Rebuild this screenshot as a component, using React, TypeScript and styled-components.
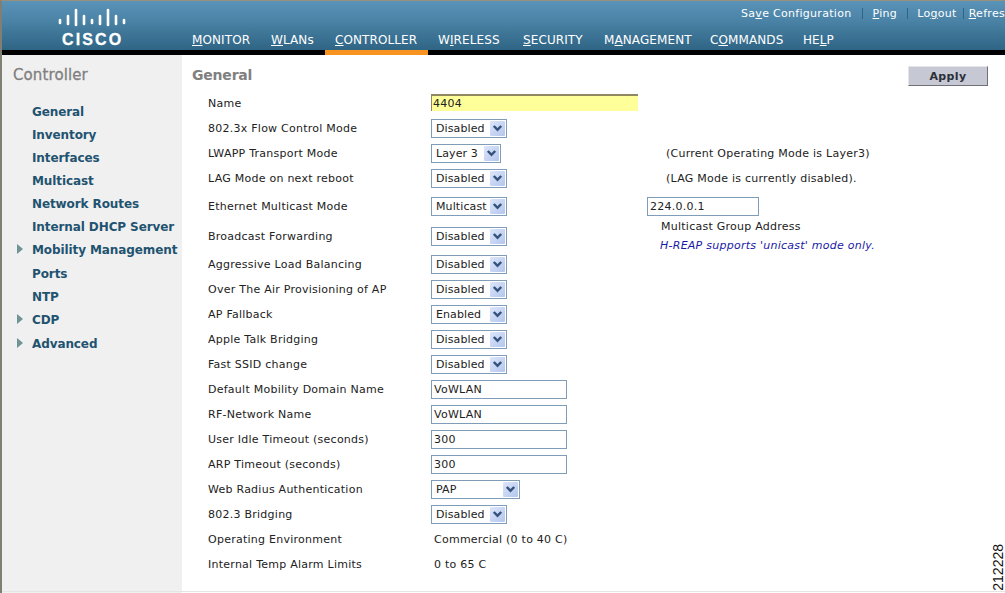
import styled, {createGlobalStyle} from "styled-components";

const GlobalStyle = createGlobalStyle`
    html, body {
        margin: 0;
        padding: 0;
        background: #FFF;
        overflow: hidden;
    }
    * {
        box-sizing: border-box;
    }
`

const Page = styled.div`
    position: relative;
    width: 1005px;
    height: 593px;
    overflow: hidden;
    display: flex;
    flex-direction: column;
    border-top: 1px solid #9A8F78;
    border-left: 2px solid #7F7F74;
    font-family: "DejaVu Sans", Verdana, sans-serif;
    font-size: 11px;
    letter-spacing: 0.25px;
    color: #222;
`

const Header = styled.header`
    flex: none;
    height: 49px;
    display: flex;
    background: linear-gradient(180deg, #5A93B8 0%, #4A83A6 40%, #2F6484 100%);
`

const LogoBlock = styled.div`
    flex: none;
    width: 190px;
    display: flex;
    flex-direction: column;
    align-items: flex-start;
    padding: 7px 0 0 56px;
    gap: 4px;
`

const LogoText = styled.span`
    margin-left: 4px;
    font-family: "Liberation Sans", Arial, sans-serif;
    font-size: 16px;
    font-weight: 700;
    line-height: 15px;
    letter-spacing: 2.1px;
    color: #FFF;
    -webkit-text-stroke: 0.3px #FFF;
`

const HeaderRight = styled.div`
    flex: 1;
    min-width: 0;
    display: flex;
    flex-direction: column;
    justify-content: space-between;
`

const TopLinks = styled.div`
    display: flex;
    align-items: center;
    white-space: nowrap;
    height: 24px;
    padding-left: 539px;
    overflow: hidden;
    color: #FFF;
    letter-spacing: 0.3px;
`

const TopLink = styled.span<{ $left: number, $right?: number, $last?: boolean }>`
    flex: none;
    padding: 0 ${p => p.$right ?? 10}px 0 ${p => p.$left}px;
    border-right: ${p => p.$last ? 'none' : '1px solid #2F6484'};
    line-height: 11px;
`

const Nav = styled.nav`
    display: flex;
    height: 19px;
`

const NavItem = styled.span<{ $width: number, $active?: boolean }>`
    flex: none;
    width: ${p => p.$width}px;
    line-height: 18px;
    font-size: 12px;
    letter-spacing: 0.1px;
    color: #FFF;
    white-space: nowrap;
    padding-left: ${p => p.$active ? '10px' : '0'};
`

const BlackBar = styled.div`
    flex: none;
    height: 5px;
    background: #000;
    padding-left: 323px;
`

const ActiveMark = styled.div`
    width: 103px;
    height: 5px;
    background: #F7931E;
`

const Body = styled.div`
    flex: 1;
    min-height: 0;
    display: flex;
`

const Sidebar = styled.aside`
    flex: none;
    width: 180px;
    background: #F0F0F0;
    padding: 10px 0 0 11px;
`

const SideTitle = styled.h2`
    margin: 0 0 16px 0;
    font-size: 15px;
    font-weight: 400;
    line-height: 20px;
    letter-spacing: 0.1px;
    color: #808080;
    -webkit-text-stroke: 0.3px #808080;
`

const SideList = styled.ul`
    list-style: none;
    margin: 0;
    padding: 0;
`

const SideItem = styled.li<{ $arrow?: boolean }>`
    position: relative;
    height: ${p => p.$arrow ? 24 : 23}px;
    line-height: 23px;
    padding-left: 19px;
    font-size: 12px;
    font-weight: 700;
    letter-spacing: -0.1px;
    white-space: nowrap;
    color: #1F5370;

    &::before {
        content: "";
        display: ${p => p.$arrow ? 'block' : 'none'};
        position: absolute;
        left: 4px;
        top: 5px;
        border-left: 6px solid #6E9494;
        border-top: 5px solid transparent;
        border-bottom: 5px solid transparent;
    }
`

const Main = styled.main`
    flex: 1;
    min-width: 0;
    padding: 10px 17px 0 10px;
`

const TitleRow = styled.div`
    display: flex;
    justify-content: space-between;
    align-items: flex-start;
    height: 26px;
`

const PageTitle = styled.h1`
    margin: 0;
    font-size: 14px;
    font-weight: 700;
    line-height: 21px;
    letter-spacing: -0.2px;
    color: #808080;
`

const ApplyButton = styled.button`
    width: 80px;
    height: 20px;
    margin-top: 1px;
    padding: 0;
    font-family: inherit;
    font-size: 11px;
    font-weight: 700;
    letter-spacing: 0.4px;
    color: #2A2F3A;
    background: #C6C8D4;
    border: 1px solid;
    border-color: #E4E4EA #6F7078 #6F7078 #E4E4EA;
`

const Form = styled.div`
    display: flex;
    flex-direction: column;
    padding-left: 16px;
`

const Row = styled.div<{ $height?: number }>`
    display: grid;
    grid-template-columns: 223px 216px 1fr;
    grid-template-rows: 100%;
    align-items: center;
    height: ${p => p.$height ?? 25}px;
`

const Label = styled.span`
    white-space: nowrap;
`

const TextInput = styled.input<{ $width?: number }>`
    display: block;
    width: ${p => p.$width ?? 136}px;
    height: 19px;
    padding: 0 2px;
    font-family: inherit;
    font-size: 11px;
    letter-spacing: inherit;
    color: #222;
    background: #FFF;
    border: 1px solid #7F9DB9;
    outline: none;
`

const NameInput = styled(TextInput)`
    width: 207px;
    height: 17px;
    margin-bottom: 2px;
    padding: 0 1px;
    background: #FFFF99;
    border: none;
    border-top: 2px solid #8E8760;
    border-left: 1px solid #8E8760;
`

const SelectBox = styled.div<{ $width: number }>`
    display: flex;
    align-items: center;
    justify-content: space-between;
    width: ${p => p.$width}px;
    height: 19px;
    padding: 1px 1px 1px 4px;
    letter-spacing: 0.1px;
    background: #FFF;
    border: 1px solid #7F9DB9;
`

const SelectArrow = styled.span`
    flex: none;
    width: 15px;
    height: 15px;
    display: flex;
    align-items: center;
    justify-content: center;
    background: linear-gradient(135deg, #DCE6FA 0%, #B4C6EE 100%);
    border-radius: 1px;
`

const PlainValue = styled.span`
    padding-left: 3px;
    white-space: nowrap;
`

const NoteStack = styled.div`
    margin-bottom: 2px;
`

const Note = styled.div<{ $indent: number, $blue?: boolean }>`
    padding-left: ${p => p.$indent}px;
    white-space: nowrap;
    line-height: 19px;
    font-style: ${p => p.$blue ? 'italic' : 'normal'};
    color: ${p => p.$blue ? '#1A1AA6' : '#222'};
`

const FigureNumber = styled.span`
    position: absolute;
    right: 0;
    bottom: 2px;
    writing-mode: vertical-rl;
    transform: rotate(180deg);
    font-family: "Liberation Sans", Arial, sans-serif;
    font-size: 14px;
    line-height: 13px;
    letter-spacing: 0;
    color: #111;
`

const FootLine = styled.div`
    position: absolute;
    left: 0;
    right: 0;
    bottom: 1px;
    height: 1px;
    background: #E4E4E4;
`

const ChevronIcon = () => (
    <svg width="11" height="9" viewBox="0 0 11 9">
        <path d="M1.8 2 L5.5 5.8 L9.2 2" fill="none" stroke="#34527C" strokeWidth="2.5"/>
    </svg>
)

const CiscoBars = () => (
    <svg width="70" height="20" viewBox="0 0 70 20">
        {[[2, 12, 15], [10, 8, 16], [18, 2, 17], [26, 8, 16], [34, 12, 15], [42, 8, 16], [50, 2, 17], [58, 8, 16], [66, 12, 15]].map(([x, top, bottom]) =>
            <line key={x} x1={x} x2={x} y1={top} y2={bottom} stroke="#FFF" strokeWidth="2.6" strokeLinecap="round"/>
        )}
    </svg>
)

const Select = ({value, width}: { value: string, width: number }) => (
    <SelectBox $width={width}>
        <span>{value}</span>
        <SelectArrow><ChevronIcon/></SelectArrow>
    </SelectBox>
)

const menu = [
    {name: 'General'},
    {name: 'Inventory'},
    {name: 'Interfaces'},
    {name: 'Multicast'},
    {name: 'Network Routes'},
    {name: 'Internal DHCP Server'},
    {name: 'Mobility Management', arrow: true},
    {name: 'Ports'},
    {name: 'NTP'},
    {name: 'CDP', arrow: true},
    {name: 'Advanced', arrow: true},
]

export default function App() {
    return (
        <Page>
            <GlobalStyle/>
            <Header>
                <LogoBlock>
                    <CiscoBars/>
                    <LogoText>CISCO</LogoText>
                </LogoBlock>
                <HeaderRight>
                    <TopLinks>
                        <TopLink $left={10}>Sa<u>v</u>e Configuration</TopLink>
                        <TopLink $left={10}><u>P</u>ing</TopLink>
                        <TopLink $left={9} $right={6}>Lo<u>g</u>out</TopLink>
                        <TopLink $left={5} $right={0} $last><u>R</u>efresh</TopLink>
                    </TopLinks>
                    <Nav>
                        <NavItem $width={79}><u>M</u>ONITOR</NavItem>
                        <NavItem $width={54}><u>W</u>LANs</NavItem>
                        <NavItem $width={113} $active><u>C</u>ONTROLLER</NavItem>
                        <NavItem $width={85}>W<u>I</u>RELESS</NavItem>
                        <NavItem $width={81}><u>S</u>ECURITY</NavItem>
                        <NavItem $width={106}>M<u>A</u>NAGEMENT</NavItem>
                        <NavItem $width={93}>C<u>O</u>MMANDS</NavItem>
                        <NavItem $width={50}>HE<u>L</u>P</NavItem>
                    </Nav>
                </HeaderRight>
            </Header>
            <BlackBar><ActiveMark/></BlackBar>
            <Body>
                <Sidebar>
                    <SideTitle>Controller</SideTitle>
                    <SideList>
                        {menu.map(i => <SideItem key={i.name} $arrow={i.arrow}>{i.name}</SideItem>)}
                    </SideList>
                </Sidebar>
                <Main>
                    <TitleRow>
                        <PageTitle>General</PageTitle>
                        <ApplyButton>Apply</ApplyButton>
                    </TitleRow>
                    <Form>
                        <Row><Label>Name</Label><NameInput defaultValue="4404"/></Row>
                        <Row><Label>802.3x Flow Control Mode</Label><Select value="Disabled" width={76}/></Row>
                        <Row>
                            <Label>LWAPP Transport Mode</Label>
                            <Select value="Layer 3" width={70}/>
                            <Note $indent={19}>(Current Operating Mode is Layer3)</Note>
                        </Row>
                        <Row>
                            <Label>LAG Mode on next reboot</Label>
                            <Select value="Disabled" width={76}/>
                            <Note $indent={19}>(LAG Mode is currently disabled).</Note>
                        </Row>
                        <Row $height={31}>
                            <Label>Ethernet Multicast Mode</Label>
                            <Select value="Multicast" width={76}/>
                            <TextInput $width={112} defaultValue="224.0.0.1"/>
                        </Row>
                        <Row $height={29}>
                            <Label>Broadcast Forwarding</Label>
                            <Select value="Disabled" width={76}/>
                            <NoteStack>
                                <Note $indent={14}>Multicast Group Address</Note>
                                <Note $indent={13} $blue>H-REAP supports 'unicast' mode only.</Note>
                            </NoteStack>
                        </Row>
                        <Row $height={26}><Label>Aggressive Load Balancing</Label><Select value="Disabled" width={76}/></Row>
                        <Row><Label>Over The Air Provisioning of AP</Label><Select value="Disabled" width={76}/></Row>
                        <Row><Label>AP Fallback</Label><Select value="Enabled" width={76}/></Row>
                        <Row><Label>Apple Talk Bridging</Label><Select value="Disabled" width={76}/></Row>
                        <Row><Label>Fast SSID change</Label><Select value="Disabled" width={76}/></Row>
                        <Row><Label>Default Mobility Domain Name</Label><TextInput defaultValue="VoWLAN"/></Row>
                        <Row><Label>RF-Network Name</Label><TextInput defaultValue="VoWLAN"/></Row>
                        <Row><Label>User Idle Timeout (seconds)</Label><TextInput defaultValue="300"/></Row>
                        <Row><Label>ARP Timeout (seconds)</Label><TextInput defaultValue="300"/></Row>
                        <Row><Label>Web Radius Authentication</Label><Select value="PAP" width={89}/></Row>
                        <Row><Label>802.3 Bridging</Label><Select value="Disabled" width={76}/></Row>
                        <Row><Label>Operating Environment</Label><PlainValue>Commercial (0 to 40 C)</PlainValue></Row>
                        <Row><Label>Internal Temp Alarm Limits</Label><PlainValue>0 to 65 C</PlainValue></Row>
                    </Form>
                </Main>
            </Body>
            <FootLine/>
            <FigureNumber>212228</FigureNumber>
        </Page>
    );
}
